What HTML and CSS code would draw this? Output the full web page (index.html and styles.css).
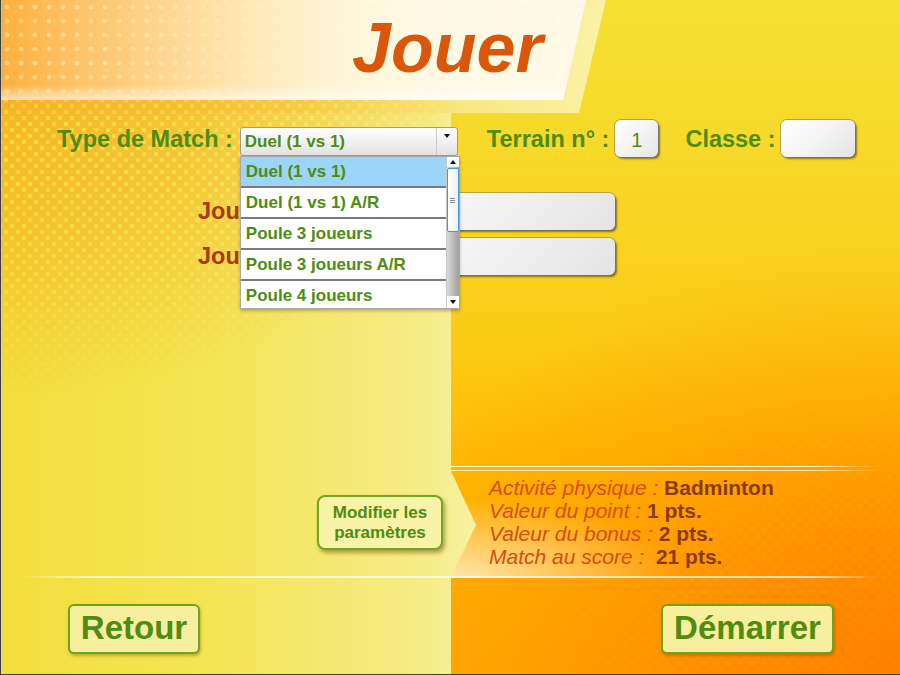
FILE: index.html
```html
<!DOCTYPE html>
<html>
<head>
    <meta charset="UTF-8">
    <title>Jouer</title>
    <link rel="stylesheet" href="styles.css">
</head>
<body>
    <div class="screen">
        <div class="dots dots-tl"></div>
        <div class="dots dots-br"></div>

        <header class="banner">
            <div class="banner-panel">
                <h1 class="title">Jouer</h1>
            </div>
        </header>

        <main class="form">
            <div class="row row-top">
                <label class="label">Type de Match :</label>
                <div class="select">
                    <span class="select-value">Duel (1 vs 1)</span>
                    <span class="select-btn"><span class="tri tri-down"></span></span>

                    <div class="dropdown">
                        <ul class="options">
                            <li class="option selected">Duel (1 vs 1)</li>
                            <li class="option">Duel (1 vs 1) A/R</li>
                            <li class="option">Poule 3 joueurs</li>
                            <li class="option">Poule 3 joueurs A/R</li>
                            <li class="option">Poule 4 joueurs</li>
                        </ul>
                        <div class="scrollbar">
                            <div class="sb-arrow"><span class="tri tri-up"></span></div>
                            <div class="sb-thumb"><span class="grip"></span></div>
                            <div class="sb-track"></div>
                            <div class="sb-arrow sb-bottom"><span class="tri tri-down"></span></div>
                        </div>
                    </div>
                </div>
                <label class="label label-terrain">Terrain n° :</label>
                <div class="field field-terrain">1</div>
                <label class="label label-classe">Classe :</label>
                <div class="field field-classe"></div>
            </div>

            <div class="row row-player first">
                <label class="label player-label">Joueur 1 :</label>
                <div class="field field-player"></div>
            </div>
            <div class="row row-player">
                <label class="label player-label">Joueur 2 :</label>
                <div class="field field-player"></div>
            </div>
        </main>

        <section class="band">
            <div class="band-left">
                <button class="btn-params">Modifier les<br>paramètres</button>
            </div>
            <div class="band-right info">
                <p><em>Activité physique :</em> <b>Badminton</b></p>
                <p><em>Valeur du point :</em> <b>1 pts.</b></p>
                <p><em>Valeur du bonus :</em> <b>2 pts.</b></p>
                <p><em>Match au score :</em>&nbsp; <b>21 pts.</b></p>
            </div>
        </section>

        <footer class="actions">
            <button class="btn-big btn-retour">Retour</button>
            <button class="btn-big btn-start">Démarrer</button>
        </footer>
    </div>
</body>
</html>
```

FILE: styles.css
```css
* {
    box-sizing: border-box;
}

body {
    margin: 0;
    background: #3b4046;
    font-family: "Liberation Sans", Arial, sans-serif;
}

.screen {
    position: relative;
    width: 900px;
    height: 675px;
    overflow: hidden;
    display: flex;
    flex-direction: column;
    /* right half : yellow turning orange toward the bottom corner */
    background:
        radial-gradient(ellipse 560px 430px at 100% 100%, #ff8300 0%, rgba(255, 140, 0, 0.55) 45%, rgba(255, 150, 0, 0) 100%),
        linear-gradient(to bottom, #f5e032 0px, #f7d92a 150px, #fbcb15 340px, #ffb900 470px, #ffaa00 675px);
}

/* left half, paler toward the middle */
.screen::before {
    content: "";
    position: absolute;
    left: 0;
    top: 0;
    bottom: 0;
    width: 451px;
    background: linear-gradient(to right, #f3de3c 0px, #f4e452 200px, #f6ec88 430px, #f7ef95 451px);
    z-index: 0;
}

/* thin dark frame on the left and bottom */
.screen::after {
    content: "";
    position: absolute;
    inset: 0;
    border-left: 1px solid #3b4046;
    border-bottom: 1px solid #3b4046;
    pointer-events: none;
    z-index: 10;
}

.dots {
    position: absolute;
    z-index: 2;
    pointer-events: none;
    background-size: 12px 12px;
    background-position: 0 0, 6px 6px;
}

.dots-tl {
    left: 0;
    top: 100px;
    width: 540px;
    height: 350px;
    background-image:
        radial-gradient(circle, rgba(248, 168, 28, 0.75) 3.8px, transparent 4.8px),
        radial-gradient(circle, rgba(248, 168, 28, 0.75) 3.8px, transparent 4.8px);
    -webkit-mask-image: radial-gradient(ellipse 100% 100% at 0 0, #000 0%, rgba(0, 0, 0, 0.7) 35%, transparent 85%);
    mask-image: radial-gradient(ellipse 100% 100% at 0 0, #000 0%, rgba(0, 0, 0, 0.7) 35%, transparent 85%);
}

.dots-br {
    right: 0;
    bottom: 0;
    width: 460px;
    height: 330px;
    background-image:
        radial-gradient(circle, rgba(255, 125, 0, 0.45) 3.6px, transparent 4.6px),
        radial-gradient(circle, rgba(255, 125, 0, 0.45) 3.6px, transparent 4.6px);
    -webkit-mask-image: radial-gradient(ellipse 100% 100% at 100% 100%, #000 0%, rgba(0, 0, 0, 0.55) 40%, transparent 85%);
    mask-image: radial-gradient(ellipse 100% 100% at 100% 100%, #000 0%, rgba(0, 0, 0, 0.55) 40%, transparent 85%);
}

/* header */

.banner {
    position: relative;
    z-index: 1;
    flex: none;
    height: 113px;
    clip-path: polygon(0 0, 606px 0, 579px 113px, 0 113px);
    background: linear-gradient(to right, #f6d23a 0px, #f7dc55 300px, #f9ea8a 500px, #fbf1a6 606px);
}

.banner-panel {
    height: 100px;
    padding: 9px 0 0 352px;
    clip-path: polygon(0 0, 586px 0, 563px 100px, 0 100px);
    background:
        linear-gradient(to bottom, rgba(255, 255, 255, 0) 85%, rgba(255, 255, 255, 0.6) 100%),
        linear-gradient(to right, rgba(253, 176, 62, 0) 0px, rgba(255, 250, 230, 0.9) 420px),
        radial-gradient(circle, rgba(255, 222, 140, 0.8) 2px, transparent 2.8px) 0 0 / 14px 14px,
        linear-gradient(to right, #fdb03e 0px, #fdbc55 120px, #fed27e 250px, #fff0c2 380px, #fffae6 470px, #fffdf2 586px);
}

.title {
    margin: 0;
    font-size: 70px;
    line-height: 78px;
    font-style: italic;
    font-weight: bold;
    color: #d9560b;
}

/* form */

.form {
    position: relative;
    z-index: 3;
    flex: 1;
    padding-top: 7px;
}

.row {
    display: flex;
    align-items: flex-start;
    height: 37px;
}

.row-top {
    padding-left: 57px;
}

.label {
    margin-top: 7px;
    font-size: 23.5px;
    line-height: 25px;
    font-weight: bold;
    color: #4e8c12;
    white-space: nowrap;
}

.select {
    position: relative;
    display: flex;
    width: 218px;
    height: 29px;
    margin: 7px 0 0 7px;
    border: 1px solid #9c9c9c;
    border-radius: 3px;
    background: linear-gradient(#ffffff, #eeeeee 60%, #e2e2e2);
}

.select-value {
    flex: 1;
    padding-left: 4px;
    font-size: 17px;
    line-height: 27px;
    font-weight: bold;
    color: #4e8c12;
}

.select-btn {
    width: 21px;
    display: flex;
    justify-content: center;
    padding-top: 6px;
    border-left: 1px solid #c9c9c9;
}

.tri {
    width: 0;
    height: 0;
    border-left: 3.5px solid transparent;
    border-right: 3.5px solid transparent;
}

.tri-down {
    border-top: 4px solid #111;
}

.tri-up {
    border-bottom: 4px solid #111;
}

.dropdown {
    position: absolute;
    left: -1px;
    top: 28px;
    z-index: 5;
    display: flex;
    width: 220px;
    height: 153px;
    overflow: hidden;
    background: #fff;
    border: 1px solid #a8a8a8;
    box-shadow: 0 2px 3px rgba(0, 0, 0, 0.25);
}

.options {
    flex: 1;
    margin: 0;
    padding: 0;
    list-style: none;
}

.option {
    height: 31px;
    padding-left: 5px;
    border-bottom: 2px solid #7b7b7b;
    font-size: 17px;
    line-height: 29px;
    font-weight: bold;
    color: #4e8c12;
    white-space: nowrap;
}

.option.selected {
    background: #9bd5f9;
}

.scrollbar {
    width: 13px;
    display: flex;
    flex-direction: column;
    border-left: 1px solid #c8c8c8;
    background: linear-gradient(to right, #dadada, #b6b6b6 60%, #a0a0a0);
}

.sb-arrow {
    height: 10px;
    display: flex;
    justify-content: center;
    align-items: center;
    background: #fff;
}

.sb-bottom {
    height: 12px;
}

.sb-thumb {
    height: 64px;
    margin: 1px 0 0;
    display: flex;
    justify-content: center;
    align-items: center;
    border: 1px solid #3d9ae6;
    border-radius: 2px;
    background: linear-gradient(to right, #ffffff, #f0f0f0);
}

.grip {
    width: 5px;
    height: 5px;
    background: repeating-linear-gradient(to bottom, #8a8a8a 0 1px, transparent 1px 2px);
}

.sb-track {
    flex: 1;
}

.field {
    height: 37px;
    border-radius: 6px;
    background: linear-gradient(135deg, #ffffff 0%, #f4f4f4 50%, #e4e4e4 100%);
    box-shadow: 0 0 0 1px rgba(110, 110, 110, 0.5), 2px 2px 2px rgba(40, 40, 40, 0.55);
}

.label-terrain {
    margin-left: 29px;
}

.field-terrain {
    width: 43px;
    margin-left: 6px;
    padding-top: 3px;
    font-size: 20px;
    line-height: 35px;
    text-align: center;
    color: #4e8c12;
}

.label-classe {
    margin-left: 27px;
}

.field-classe {
    width: 74px;
    margin-left: 5px;
}

.row-player {
    width: 615px;
    padding-left: 198px;
    margin-top: 8px;
}

.row-player.first {
    margin-top: 36px;
}

.player-label {
    margin-top: 6px;
    color: #a63c0c;
}

.field-player {
    flex: 1;
    margin-left: 9px;
}

/* settings band */

.band {
    position: relative;
    z-index: 3;
    flex: none;
    height: 112px;
    display: flex;
    background: radial-gradient(ellipse 230px 80px at 452px 100%, rgba(255, 236, 190, 0.9), rgba(255, 220, 150, 0) 100%);
}

.band::before {
    content: "";
    position: absolute;
    left: 20px;
    right: 20px;
    top: 0;
    height: 5px;
    background: linear-gradient(to bottom, rgba(255, 255, 255, 0.9) 0 1.5px, transparent 1.5px 4px, rgba(255, 255, 255, 0.75) 4px 5px);
    -webkit-mask-image: linear-gradient(to right, transparent, #000 8%, #000 92%, transparent);
    mask-image: linear-gradient(to right, transparent, #000 8%, #000 92%, transparent);
}

.band::after {
    content: "";
    position: absolute;
    left: 20px;
    right: 20px;
    bottom: 0;
    height: 2px;
    background: rgba(255, 255, 255, 0.7);
    -webkit-mask-image: linear-gradient(to right, transparent, #000 8%, #000 92%, transparent);
    mask-image: linear-gradient(to right, transparent, #000 8%, #000 92%, transparent);
}

.band-left {
    flex: none;
    width: 477px;
    display: flex;
    justify-content: flex-end;
    align-items: flex-start;
    padding: 29px 34px 0 0;
    clip-path: polygon(0 0, 451px 0, 451px 5px, 476px 59px, 451px 111px, 451px 112px, 0 112px);
    background: linear-gradient(to right, #f3de3c 0px, #f4e452 200px, #f6ec88 430px, #f7ef95 451px, #f8f1a2 477px);
}

.btn-params {
    width: 126px;
    height: 55px;
    padding: 0;
    border: 2px solid #74a626;
    border-radius: 8px;
    background: #f8f3a6;
    box-shadow: 2px 3px 4px rgba(80, 60, 0, 0.45);
    font-family: "Liberation Sans", Arial, sans-serif;
    font-size: 17px;
    line-height: 20px;
    font-weight: bold;
    color: #4e8c12;
}

.band-right {
    flex: 1;
    padding: 10px 0 0 12px;
}

.info p {
    margin: 0;
    font-size: 21px;
    line-height: 23px;
    white-space: nowrap;
}

.info em {
    color: #d84c10;
}

.info b {
    color: #8a3a0c;
}

/* bottom buttons */

.actions {
    position: relative;
    z-index: 3;
    flex: none;
    height: 97px;
    display: flex;
    justify-content: space-between;
    align-items: flex-start;
    padding: 26px 66px 0 68px;
}

.btn-big {
    height: 50px;
    padding: 0 0 2px;
    border: 2px solid #6ca31f;
    border-radius: 6px;
    background: #f8ef9e;
    box-shadow: 1px 2px 3px rgba(100, 70, 0, 0.35);
    font-family: "Liberation Sans", Arial, sans-serif;
    font-size: 33px;
    line-height: 42px;
    font-weight: bold;
    color: #4e8c12;
}

.btn-retour {
    width: 132px;
}

.btn-start {
    width: 173px;
}
```
